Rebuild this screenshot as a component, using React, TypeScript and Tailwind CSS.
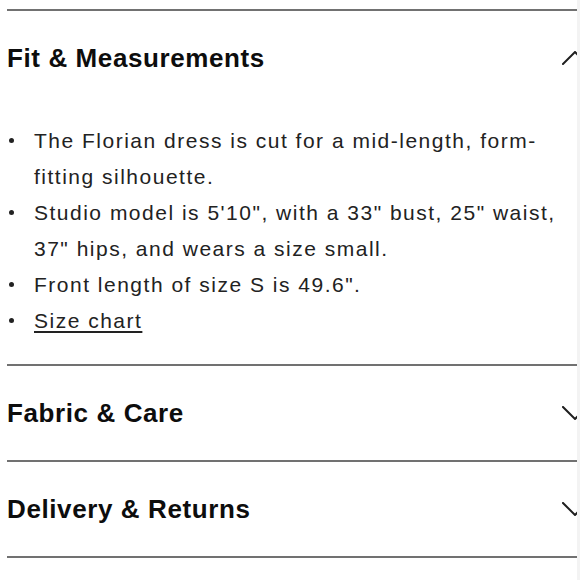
import React from 'react'

const FONT = '"Liberation Sans", Arial, sans-serif'

function Chevron({ up }: { up?: boolean }) {
  return (
    <svg width="26" height="14" viewBox="0 0 26 14" className="-mr-[11px] shrink-0" fill="none">
      <path
        d={up ? 'M1 13 L13 1 L25 13' : 'M1 1 L13 13 L25 1'}
        stroke="#1f1f1f"
        strokeWidth="2"
        strokeLinecap="square"
      />
    </svg>
  )
}

function SectionHeader({ title, open }: { title: string; open?: boolean }) {
  return (
    <div className="h-[94px] flex items-center justify-between">
      <h3 className="text-[26px] font-bold tracking-[0.6px] text-[#0d0d0d]">{title}</h3>
      <Chevron up={open} />
    </div>
  )
}

const fitItems = [
  'The Florian dress is cut for a mid-length, form-fitting silhouette.',
  'Studio model is 5\'10", with a 33" bust, 25" waist, 37" hips, and wears a size small.',
  'Front length of size S is 49.6".',
]

function Bullet() {
  return (
    <span className="w-[27px] shrink-0 flex items-start pt-[15px] pl-[2px]">
      <span className="w-[5px] h-[5px] rounded-full bg-[#222]" />
    </span>
  )
}

export default function App() {
  return (
    <div className="w-[580px] h-[580px] bg-white flex overflow-hidden" style={{ fontFamily: FONT }}>
      <div className="w-[577px] pl-[7px] pt-[9px] overflow-hidden">
        <section className="border-t-2 border-[#717171] pb-[25px]">
          <SectionHeader title="Fit & Measurements" open />
          <ul className="mt-[18px] text-[21px] leading-[36px] tracking-[1.5px] text-[#222]">
            {fitItems.map((item) => (
              <li key={item} className="flex">
                <Bullet />
                <span className="w-[530px]">{item}</span>
              </li>
            ))}
            <li className="flex">
              <Bullet />
              <a className="underline underline-offset-[3px] decoration-[1.5px]">Size chart</a>
            </li>
          </ul>
        </section>
        <section className="border-t-2 border-[#717171]">
          <SectionHeader title="Fabric & Care" />
        </section>
        <section className="border-t-2 border-[#717171]">
          <SectionHeader title="Delivery & Returns" />
        </section>
        <div className="border-t-2 border-[#717171]" />
      </div>
      <div className="w-[3px] bg-[#f3f3f3]" />
    </div>
  )
}
